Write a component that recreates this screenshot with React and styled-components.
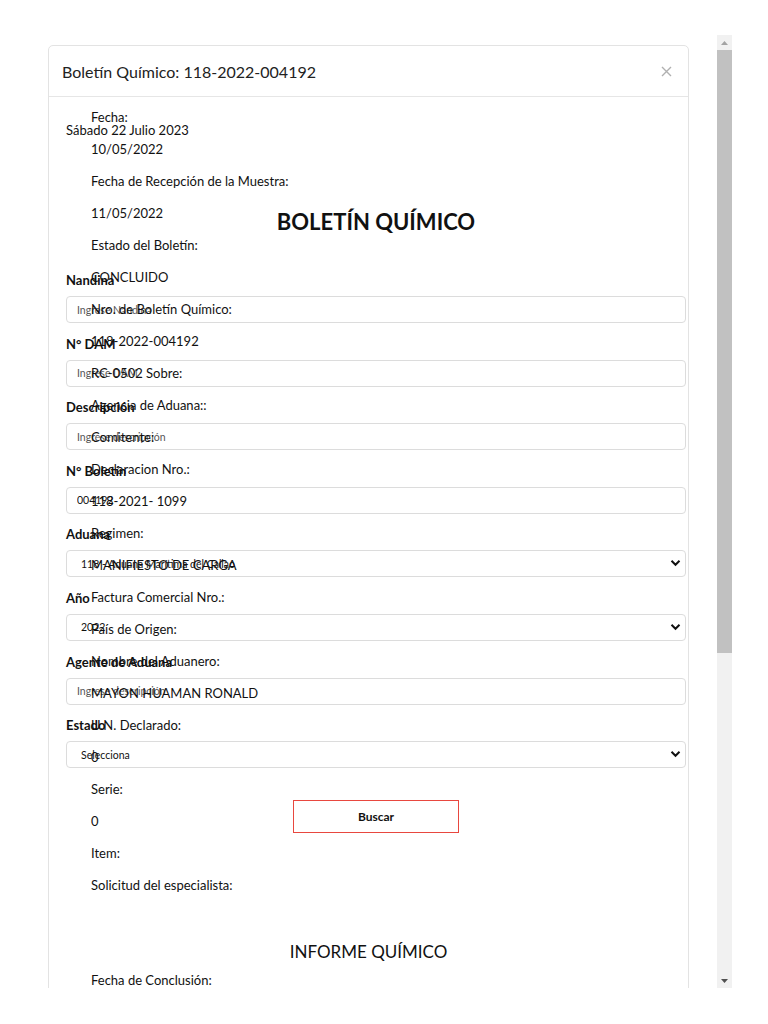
import React from "react";
import styled, { createGlobalStyle } from "styled-components";

const GlobalStyle = createGlobalStyle`
  html, body {
    margin: 0;
    padding: 0;
    background: #fff;
  }
  body {
    font-family: Lato, "Liberation Sans", sans-serif;
    color: #111;
  }
`;

const Frame = styled.div`
  display: flex;
  margin-top: 35px;
  width: 732px;
  height: 953px;
`;

const Viewport = styled.div`
  flex: 1;
  overflow: hidden;
`;

const ScrollBar = styled.div`
  width: 15px;
  display: flex;
  flex-direction: column;
  background: #f1f1f1;
`;

const ScrollArrow = styled.div`
  height: 15px;
  display: flex;
  align-items: center;
  justify-content: center;
  flex-shrink: 0;
`;

const ScrollThumb = styled.div`
  height: 603px;
  background: #c1c1c1;
`;

const ScrollRest = styled.div`
  flex: 1;
`;

const Modal = styled.div`
  margin: 10px 0 0 48px;
  width: 641px;
  box-sizing: border-box;
  border: 1px solid #e3e3e3;
  border-radius: 5px;
  background: #fff;
`;

const ModalHeader = styled.div`
  height: 50px;
  display: flex;
  align-items: center;
  justify-content: space-between;
  padding: 0 14px 0 13px;
  border-bottom: 1px solid #e6e6e6;
`;

const ModalTitle = styled.h5`
  margin: 0;
  font-size: 16px;
  font-weight: 400;
  color: #222;
`;

const CloseButton = styled.button`
  border: none;
  background: none;
  padding: 0;
  width: 16px;
  height: 16px;
  display: flex;
  align-items: center;
  justify-content: center;
  color: #b0b0b0;
  cursor: pointer;
`;

const ModalBody = styled.div`
  position: relative;
  padding: 12px 42px 0;
`;

const DetailLine = styled.p`
  margin: 0 0 16px;
  font-size: 13px;
  line-height: 16px;
  min-height: 16px;
`;

const SectionTitle = styled.h3`
  margin: 48px 0 9px;
  text-align: center;
  font-size: 17px;
  line-height: 22px;
  font-weight: 400;
`;

const SearchForm = styled.form`
  position: absolute;
  top: 0;
  left: 17px;
  right: 2px;
  padding-top: 25px;
  display: flex;
  flex-direction: column;
`;

const DateStamp = styled.div`
  font-size: 13px;
  line-height: 16px;
`;

const FormTitle = styled.h2`
  margin: 72px 0 38px;
  text-align: center;
  font-size: 22px;
  line-height: 24px;
  font-weight: 700;
`;

const Field = styled.div`
  display: flex;
  flex-direction: column;
  gap: 8px;
  margin-bottom: 12.6px;
`;

const Label = styled.label`
  font-size: 13px;
  line-height: 16px;
  font-weight: 700;
`;

const TextInput = styled.input`
  box-sizing: border-box;
  height: 27px;
  width: 100%;
  padding: 0 10px;
  border: 1px solid #dcdcdc;
  border-radius: 4px;
  background: transparent;
  font-family: inherit;
  font-size: 10.5px;
  color: #111;
  outline: none;

  &::placeholder {
    color: #555;
  }
`;

const SelectWrap = styled.div`
  position: relative;
`;

const Select = styled.select`
  box-sizing: border-box;
  appearance: none;
  height: 27px;
  width: 100%;
  padding: 0 14px;
  border: 1px solid #dcdcdc;
  border-radius: 4px;
  background: transparent;
  font-family: inherit;
  font-size: 10.5px;
  color: #111;
  outline: none;
`;

const Chevron = styled.svg`
  position: absolute;
  right: 5px;
  top: 9px;
  pointer-events: none;
`;

const SearchButton = styled.button`
  align-self: center;
  margin-top: 19.4px;
  width: 166px;
  height: 33px;
  border: 1px solid #e8473f;
  background: #fff;
  font-family: inherit;
  font-size: 12px;
  font-weight: 700;
  color: #111;
  cursor: pointer;
`;

const Details = styled.div`
  position: relative;
  z-index: 1;
  pointer-events: none;
`;

const details = [
  "Fecha:",
  "10/05/2022",
  "Fecha de Recepción de la Muestra:",
  "11/05/2022",
  "Estado del Boletín:",
  "CONCLUIDO",
  "Nro. de Boletín Químico:",
  "118-2022-004192",
  "RC-0502 Sobre:",
  "Agencia de Aduana::",
  "Comitente:",
  "Declaracion Nro.:",
  "118-2021- 1099",
  "Regimen:",
  "MANIFIESTO DE CARGA",
  "Factura Comercial Nro.:",
  "País de Origen:",
  "Nombre del Aduanero:",
  "MAYON HUAMAN RONALD",
  "U.N. Declarado:",
  "0",
  "Serie:",
  "0",
  "Item:",
  "Solicitud del especialista:",
];

const ChevronIcon = () => (
  <Chevron width="11" height="8" viewBox="0 0 11 8">
    <path d="M1.5 1.8l4 4 4-4" fill="none" stroke="#111" strokeWidth="2" />
  </Chevron>
);

const SelectField = ({ label, options }) => (
  <Field>
    <Label>{label}</Label>
    <SelectWrap>
      <Select defaultValue={options[0]}>
        {options.map((o) => (
          <option key={o}>{o}</option>
        ))}
      </Select>
      <ChevronIcon />
    </SelectWrap>
  </Field>
);

const InputField = ({ label, placeholder, value }) => (
  <Field>
    <Label>{label}</Label>
    <TextInput placeholder={placeholder} defaultValue={value} />
  </Field>
);

const App = () => (
  <>
    <GlobalStyle />
    <Frame>
      <Viewport>
        <Modal>
          <ModalHeader>
            <ModalTitle>Boletín Químico: 118-2022-004192</ModalTitle>
            <CloseButton aria-label="Cerrar">
              <svg width="11" height="11" viewBox="0 0 11 11">
                <path d="M1 1l9 9M10 1l-9 9" stroke="currentColor" strokeWidth="1.4" />
              </svg>
            </CloseButton>
          </ModalHeader>
          <ModalBody>
            <SearchForm onSubmit={(e) => e.preventDefault()}>
              <DateStamp>Sábado 22 Julio 2023</DateStamp>
              <FormTitle>BOLETÍN QUÍMICO</FormTitle>
              <InputField label="Nandina" placeholder="Ingrese Nandina" />
              <InputField label="N° DAM" placeholder="Ingrese DAM" />
              <InputField label="Descripción" placeholder="Ingrese descripción" />
              <InputField label="N° Boletín" value="004192" />
              <SelectField
                label="Aduana"
                options={["118 - Aduana Marítima del Callao"]}
              />
              <SelectField label="Año" options={["2022", "2021", "2023"]} />
              <InputField label="Agente de Aduana" placeholder="Ingrese descripción" />
              <SelectField label="Estado" options={["Selecciona", "CONCLUIDO"]} />
              <SearchButton type="submit">Buscar</SearchButton>
            </SearchForm>
            <Details>
              {details.map((d, i) => (
                <DetailLine key={i}>{d}</DetailLine>
              ))}
              <SectionTitle>INFORME QUÍMICO</SectionTitle>
              <DetailLine>Fecha de Conclusión:</DetailLine>
            </Details>
          </ModalBody>
        </Modal>
      </Viewport>
      <ScrollBar aria-hidden="true">
        <ScrollArrow>
          <svg width="7" height="4" viewBox="0 0 7 4">
            <path d="M0 4L3.5 0 7 4z" fill="#a3a3a3" />
          </svg>
        </ScrollArrow>
        <ScrollThumb />
        <ScrollRest />
        <ScrollArrow>
          <svg width="7" height="4" viewBox="0 0 7 4">
            <path d="M0 0L3.5 4 7 0z" fill="#505050" />
          </svg>
        </ScrollArrow>
      </ScrollBar>
    </Frame>
  </>
);

export default App;
